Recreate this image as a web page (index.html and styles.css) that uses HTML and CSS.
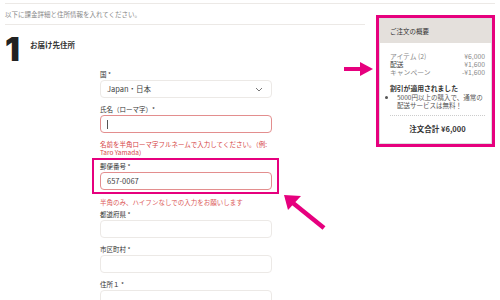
FILE: index.html
```html
<!DOCTYPE html>
<html lang="ja">
<head>
    <meta charset="UTF-8">
    <title>お届け先住所</title>
    <link rel="stylesheet" href="styles.css">
</head>
<body>

    <div class="page">
        <div class="top-line"></div>

        <div class="layout">
            <!-- 左側：フォーム -->
            <div class="main">
                <p class="intro">以下に課金詳細と住所情報を入れてください。</p>

                <div class="step">
                    <span class="step-num">1</span>
                    <span class="step-title">お届け先住所</span>
                </div>

                <div class="form">
                    <div class="field">
                        <label>国 *</label>
                        <div class="input select">Japan・日本
                            <svg class="chevron" width="8" height="5" viewBox="0 0 8 5"><path d="M1 1l3 3 3-3" fill="none" stroke="#777" stroke-width="1"/></svg>
                        </div>
                    </div>

                    <div class="field">
                        <label>氏名（ローマ字）*</label>
                        <div class="input error"><span class="caret"></span></div>
                    </div>
                    <p class="error-text">名前を半角ローマ字フルネームで入力してください。（例:<br>Taro Yamada）</p>

                    <div class="highlight">
                        <div class="field">
                            <label>郵便番号 *</label>
                            <div class="input error">657-0067</div>
                        </div>
                    </div>
                    <p class="error-text single">半角のみ、ハイフンなしでの入力をお願いします</p>

                    <div class="field">
                        <label>都道府県 *</label>
                        <div class="input"></div>
                    </div>

                    <div class="field">
                        <label>市区町村 *</label>
                        <div class="input"></div>
                    </div>

                    <div class="field">
                        <label>住所１ *</label>
                        <div class="input"></div>
                    </div>
                </div>
            </div>

            <!-- 右側：注文の概要 -->
            <aside class="summary">
                <div class="summary-inner">
                    <div class="summary-head">ご注文の概要</div>
                    <div class="summary-body">
                        <div class="row"><span class="muted">アイテム (2)</span><span class="muted">¥6,000</span></div>
                        <div class="row"><span>配送</span><span class="muted">¥1,600</span></div>
                        <div class="row"><span class="muted">キャンペーン</span><span class="muted">-¥1,600</span></div>

                        <div class="discount">割引が適用されました</div>
                        <ul class="notes">
                            <li>5000円以上の購入で、通常の配送サービスは無料！</li>
                        </ul>

                        <div class="total">注文合計 ¥6,000</div>
                    </div>
                </div>
            </aside>
        </div>

        <!-- 注釈の矢印 -->
        <svg class="arrow arrow-right" width="30" height="16" viewBox="0 0 30 16">
            <path d="M0 8h18" stroke="#e6007e" stroke-width="4"/>
            <path d="M16 1l13 7-13 7z" fill="#e6007e"/>
        </svg>
        <svg class="arrow arrow-up" width="44" height="38" viewBox="0 0 44 38">
            <path d="M41 35L10 10" stroke="#e6007e" stroke-width="4.5"/>
            <path d="M1 2l17 1-13 14z" fill="#e6007e"/>
        </svg>
    </div>

</body>
</html>
```

FILE: styles.css
```css
/* Estilos generales */
body {
    margin: 0;
    font-family: "Noto Sans CJK JP", "Noto Sans", sans-serif;
    color: #444;
    background-color: #fff;
    font-size: 7px;
    overflow: hidden;
}

.page {
    position: relative;
    width: 500px;
    height: 300px;
}

.top-line {
    margin: 0 5px;
    padding-top: 3px;
    border-bottom: 1px solid #ece9e6;
}

.layout {
    display: grid;
    grid-template-columns: 360px 119px;
    column-gap: 11px;
    padding: 0 5px;
}

/* Columna principal */
.intro {
    margin: 0;
    padding: 5px 0 4px;
    line-height: 11px;
    font-size: 6.5px;
    color: #888;
    border-bottom: 1px solid #ece9e6;
}

.step {
    display: flex;
    align-items: flex-start;
    margin-top: 9px;
}

.step-num {
    font-family: Inter, "Liberation Sans", sans-serif;
    font-weight: 900;
    font-size: 33px;
    line-height: 30px;
    color: #222;
    width: 25px;
}

.step-title {
    font-weight: 700;
    font-size: 7.5px;
    color: #333;
    margin-top: 5px;
}

.form {
    margin-left: 95px;
    width: 172px;
    margin-top: 6px;
}

.field {
    margin-bottom: 7px;
}

.field label {
    display: block;
    height: 9px;
    line-height: 9px;
    font-size: 6.5px;
    color: #333;
    margin-bottom: 1px;
}

.input {
    position: relative;
    box-sizing: border-box;
    height: 18px;
    border: 1px solid #ece9e6;
    border-radius: 4px;
    padding: 0 6px;
    line-height: 16px;
    font-size: 7.5px;
    color: #444;
    background-color: #fff;
}

.input.error {
    border-color: #e38e8e;
}

.chevron {
    position: absolute;
    right: 8px;
    top: 6px;
}

.caret {
    display: inline-block;
    width: 1px;
    height: 9px;
    background-color: #555;
    vertical-align: middle;
}

.error-text {
    margin: 0;
    line-height: 8px;
    font-size: 6.5px;
    color: #d64545;
}

.error-text.single {
    margin: 4px 0 4px;
    color: #dc5a5a;
}

.highlight {
    margin: 2px -7px 0 -8px;
    padding: 2px 5px 0 6px;
    border: 2px solid #e6007e;
}

.highlight .field {
    margin-bottom: 2px;
}

/* Resumen del pedido */
.summary {
    margin-top: 11px;
    align-self: start;
    border: 3px solid #e6007e;
}

.summary-inner {
    border: 1px solid #ddd;
}

.summary-head {
    background-color: #e4e0dc;
    height: 24px;
    line-height: 24px;
    padding: 0 10px;
    font-size: 6.5px;
    color: #333;
}

.summary-body {
    padding: 9px 6px 0 10px;
}

.row {
    display: flex;
    justify-content: space-between;
    line-height: 8px;
    font-size: 6.8px;
    color: #444;
}

.muted {
    color: #888;
}

.discount {
    margin-top: 8px;
    line-height: 9px;
    font-weight: 700;
    font-size: 6.8px;
    color: #333;
}

.notes {
    margin: 0;
    padding-left: 7px;
    line-height: 8px;
    font-size: 6.5px;
    color: #555;
}

.total {
    margin-top: 6px;
    border-top: 1px dotted #ccc;
    padding: 7px 0 9px;
    text-align: center;
    font-weight: 700;
    font-size: 7.5px;
    color: #333;
}

/* Flechas de anotación */
.arrow {
    position: absolute;
}

.arrow-right {
    left: 344px;
    top: 61px;
}

.arrow-up {
    left: 283px;
    top: 193px;
}
```
